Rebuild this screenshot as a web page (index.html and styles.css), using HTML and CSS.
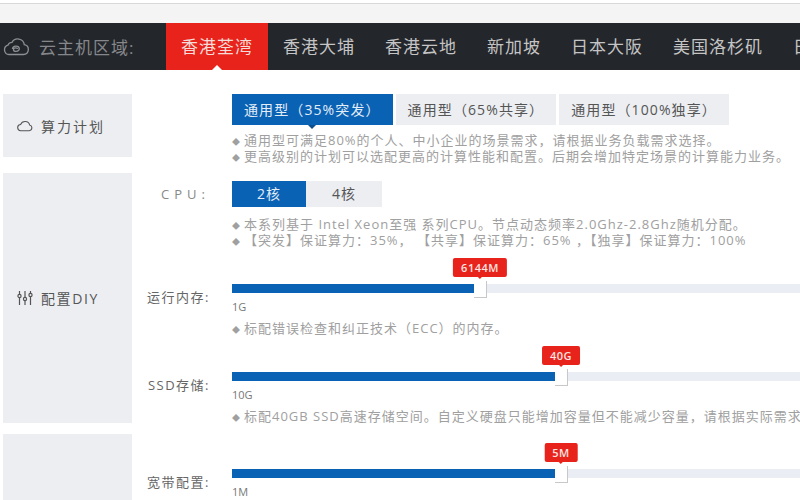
FILE: index.html

```html
<!DOCTYPE html>
<html lang="zh-CN">
<head>
    <meta charset="UTF-8">
    <meta name="viewport" content="width=device-width, initial-scale=1.0">
    <title>云主机配置</title>
    <link rel="stylesheet" href="styles.css">
</head>
<body>

    <div class="browser-strip"></div>

    <!-- 区域选择 -->
    <nav class="region-bar">
        <svg class="region-icon" viewBox="0 0 28 18" fill="none" stroke="currentColor" stroke-width="1.3">
            <path d="M7 16.5h14.5a5 5 0 0 0 .8-9.9A6.6 6.6 0 0 0 10 4.4 4.3 4.3 0 0 0 6 7.1a4.8 4.8 0 0 0 1 9.4z"/>
            <path d="M10.5 11a3.4 2.6 0 0 1 6.8-.4c0 1.7-1.6 2.8-3.4 2.8s-2.4-1-2.4-2 1-1.6 2.2-1.6 1.8.6 1.8 1.2"/>
        </svg>
        <span class="region-label">云主机区域:</span>
        <a class="region-tab active">香港荃湾</a>
        <a class="region-tab">香港大埔</a>
        <a class="region-tab">香港云地</a>
        <a class="region-tab">新加坡</a>
        <a class="region-tab">日本大阪</a>
        <a class="region-tab">美国洛杉矶</a>
        <a class="region-tab">日本东京</a>
    </nav>

    <main class="config">

        <section class="group group-plan">
            <div class="side">
                <svg class="side-icon" viewBox="0 0 16 11" fill="none" stroke="currentColor" stroke-width="1.1">
                    <path d="M4 10.2h8.2a2.9 2.9 0 0 0 .5-5.7A4.8 4.8 0 0 0 3.6 4 3.1 3.1 0 0 0 4 10.2z"/>
                </svg>
                <span>算力计划</span>
            </div>
            <div class="rows">
                <div class="row">
                    <div class="row-label"></div>
                    <div class="row-body">
                        <div class="options options-plan">
                            <a class="option selected">通用型（35%突发）</a>
                            <a class="option">通用型（65%共享）</a>
                            <a class="option">通用型（100%独享）</a>
                        </div>
                        <p class="desc desc-plan"><span class="dot">◆</span>通用型可满足80%的个人、中小企业的场景需求，请根据业务负载需求选择。<br><span class="dot">◆</span>更高级别的计划可以选配更高的计算性能和配置。后期会增加特定场景的计算能力业务。</p>
                    </div>
                </div>
            </div>
        </section>

        <section class="group group-diy">
            <div class="side">
                <svg class="side-icon" viewBox="0 0 16 14" fill="none" stroke="currentColor" stroke-width="1.2">
                    <path d="M2.5 0v3M2.5 7v7M8 0v6M8 10v4M13.5 0v2M13.5 6v8"/>
                    <circle cx="2.5" cy="5" r="1.6"/>
                    <circle cx="8" cy="8" r="1.6"/>
                    <circle cx="13.5" cy="4" r="1.6"/>
                </svg>
                <span>配置DIY</span>
            </div>
            <div class="rows">
                <div class="row">
                    <div class="row-label label-cpu">CPU:</div>
                    <div class="row-body">
                        <div class="options">
                            <a class="option option-core selected">2核</a>
                            <a class="option option-core">4核</a>
                        </div>
                        <p class="desc desc-cpu"><span class="dot">◆</span>本系列基于 Intel Xeon至强 系列CPU。节点动态频率2.0Ghz-2.8Ghz随机分配。<br><span class="dot">◆</span>【突发】保证算力：35%， 【共享】保证算力：65% ，【独享】保证算力：100%</p>
                    </div>
                </div>
                <div class="row row-slider">
                    <div class="row-label">运行内存:</div>
                    <div class="row-body">
                        <div class="slider">
                            <div class="slider-fill" style="width: 242px">
                                <span class="bubble">6144M</span>
                                <span class="thumb"></span>
                            </div>
                        </div>
                        <div class="slider-min">1G</div>
                        <p class="desc desc-slider"><span class="dot">◆</span>标配错误检查和纠正技术（ECC）的内存。</p>
                    </div>
                </div>
                <div class="row row-slider">
                    <div class="row-label">SSD存储:</div>
                    <div class="row-body">
                        <div class="slider">
                            <div class="slider-fill" style="width: 323px">
                                <span class="bubble">40G</span>
                                <span class="thumb"></span>
                            </div>
                        </div>
                        <div class="slider-min">10G</div>
                        <p class="desc desc-slider"><span class="dot">◆</span>标配40GB SSD高速存储空间。自定义硬盘只能增加容量但不能减少容量，请根据实际需求选择。</p>
                    </div>
                </div>
            </div>
        </section>

        <section class="group group-net">
            <div class="side"></div>
            <div class="rows">
                <div class="row row-slider">
                    <div class="row-label">宽带配置:</div>
                    <div class="row-body">
                        <div class="slider">
                            <div class="slider-fill" style="width: 323px">
                                <span class="bubble">5M</span>
                                <span class="thumb"></span>
                            </div>
                        </div>
                        <div class="slider-min">1M</div>
                    </div>
                </div>
            </div>
        </section>

    </main>

</body>
</html>
```

FILE: styles.css

```css
html, body {
    height: 100%;
}

body {
    margin: 0;
    overflow: hidden;
    background: #fff;
    font-family: "Open Sans", "Noto Sans CJK SC", sans-serif;
    color: #666;
}

.browser-strip {
    height: 19px;
    margin-top: 3px;
    border-top: 1px solid #d8d8d8;
    background: #f4f4f4;
}

/* 区域选择 */
.region-bar {
    display: flex;
    align-items: center;
    height: 47px;
    background: #23262b;
    color: #c4c4c4;
    white-space: nowrap;
}

.region-icon {
    flex: none;
    width: 28px;
    height: 18px;
    margin-left: 2px;
    color: #8d8f92;
}

.region-label {
    flex: none;
    width: 127px;
    margin-left: 9px;
    font-size: 17px;
    letter-spacing: 1px;
    color: #85878a;
}

.region-tab {
    position: relative;
    flex: none;
    padding: 0 15px;
    font-size: 17px;
    letter-spacing: 1px;
    line-height: 47px;
}

.region-tab.active {
    background: #e8231c;
    color: #f6dcd8;
}

.region-tab.active::after {
    content: "";
    position: absolute;
    left: 50%;
    bottom: 0;
    margin-left: -5px;
    border: 5px solid transparent;
    border-top: 0;
    border-bottom-color: #fff;
}

/* 配置区 */
.config {
    padding: 24px 0 0 3px;
}

.group {
    display: flex;
}

.group-plan {
    height: 63px;
    margin-bottom: 16px;
}

.group-diy {
    height: 250px;
    margin-bottom: 11px;
}

.group-net {
    height: 100px;
}

.side {
    flex: none;
    display: flex;
    align-items: center;
    gap: 8px;
    width: 115px;
    padding-left: 14px;
    background: #eceef2;
    font-size: 14px;
    letter-spacing: 2px;
    color: #555;
}

.group-diy .side span {
    letter-spacing: 1.6px;
}

.side-icon {
    flex: none;
    width: 16px;
    height: 14px;
}

.group-diy .rows {
    padding-top: 8px;
}

.row {
    display: flex;
}

.row-slider {
    margin-top: 36px;
}

.group-net .row-slider {
    margin-top: 35px;
}

.row-label {
    flex: none;
    width: 78px;
    margin-right: 22px;
    font-size: 13px;
    letter-spacing: 1.5px;
    line-height: 26px;
    text-align: right;
    white-space: nowrap;
}

.label-cpu {
    letter-spacing: 5px;
    color: #888;
}

.row-body {
    width: 640px;
}

.options {
    display: flex;
}

.options-plan {
    gap: 3px;
}

.option {
    flex: none;
    height: 31px;
    padding: 0 12px;
    background: #eceef2;
    font-size: 14px;
    letter-spacing: 1.1px;
    line-height: 31px;
    color: #555;
    white-space: nowrap;
}

.option.selected {
    position: relative;
    background: #0a62b5;
    color: #e4edf6;
}

.options-plan .option.selected::after {
    content: "";
    position: absolute;
    left: 50%;
    top: 100%;
    margin-left: -4px;
    border: 4px solid transparent;
    border-bottom: 0;
    border-top-color: #0d4f8f;
}

.option-core {
    width: 50px;
    height: 26px;
    line-height: 26px;
    text-align: center;
}

.option-core + .option-core {
    width: 52px;
}

.desc {
    margin: 7px 0 0;
    font-size: 13px;
    letter-spacing: 1px;
    line-height: 16px;
    color: #a0a0a0;
    white-space: nowrap;
}

.desc-cpu {
    margin-top: 9px;
}

.desc-slider {
    margin-top: 6px;
}

.dot {
    display: inline-block;
    width: 12px;
    font-size: 8px;
    letter-spacing: 0;
    line-height: 0;
}

.slider {
    height: 9px;
    background: #eaedf3;
}

.slider-fill {
    position: relative;
    height: 100%;
    background: #0a62b5;
}

.thumb {
    position: absolute;
    top: -3px;
    right: -13px;
    width: 12px;
    height: 16px;
    background: #fff;
    border-right: 1px solid #c8c8c8;
    border-bottom: 1px solid #c8c8c8;
}

.bubble {
    position: absolute;
    right: -6px;
    top: -26px;
    height: 19px;
    padding: 0 8px;
    transform: translateX(50%);
    border-radius: 2px;
    background: #e8231c;
    font-size: 11px;
    font-weight: 600;
    letter-spacing: .5px;
    line-height: 19px;
    color: #fbe4e1;
}

.bubble::after {
    content: "";
    position: absolute;
    left: 50%;
    top: 100%;
    margin-left: -2px;
    border: 2px solid transparent;
    border-bottom: 0;
    border-top-color: #e8231c;
}

.slider-min {
    margin-top: 7px;
    font-size: 11px;
    line-height: 14px;
    color: #777;
}
```
